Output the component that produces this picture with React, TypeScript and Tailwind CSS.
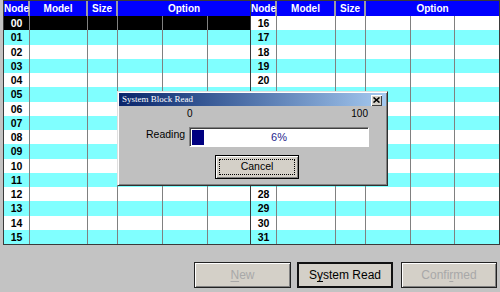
const leftCols = "grid grid-cols-[26px_58px_30px_45px_45px_42px]";
const rightCols = "grid grid-cols-[26px_59px_30px_45px_44px_44px]";

// rows whose node cell sits under the progress dialog
const hidden = [21, 22, 23, 24, 25, 26, 27];

function NodeTable({ cols, start, selected }: { cols: string; start: number; selected?: number }) {
  const rows = Array.from({ length: 16 }, (_, i) => start + i);
  return (
    <div className="flex flex-col">
      <div className={`${cols} h-[15px] bg-[#0000ff] text-white font-bold text-[10px] leading-[15px] text-center`}>
        <div className="border-r-2 border-[#9a9aa8]">Node</div>
        <div className="border-r-2 border-[#9a9aa8]">Model</div>
        <div className="border-r-2 border-[#9a9aa8]">Size</div>
        <div className="col-span-3">Option</div>
      </div>
      {rows.map((n, i) => {
        const isSel = n === selected;
        const bg = isSel ? "bg-black text-white" : i % 2 === 1 ? "bg-[#80ffff] text-black" : "bg-white text-black";
        return (
          <div key={n} className={`${cols} h-[14.25px] ${bg} text-[10.5px] font-bold leading-[14px]`}>
            <div className="border-r border-[#808080] text-center">
              {hidden.includes(n) ? "" : String(n).padStart(2, "0")}
            </div>
            <div className="border-r border-[#808080]" />
            <div className="border-r border-[#808080]" />
            <div className="border-r border-[#808080]" />
            <div className="border-r border-[#808080]" />
            <div />
          </div>
        );
      })}
    </div>
  );
}

function Mn({ children }: { children: string }) {
  return <span className="underline underline-offset-2">{children}</span>;
}

function WinButton({ children, disabled, main, className }: { children: React.ReactNode; disabled?: boolean; main?: boolean; className?: string }) {
  return (
    <div
      className={`h-[26px] flex items-center justify-center bg-[#d4d0c8] text-[12px] ${
        main ? "border-2 border-[#111]" : "border border-[#222] shadow-[inset_1px_1px_0_#ffffff,inset_-1px_-1px_0_#808080]"
      } ${disabled ? "text-[#a8a8a8]" : "text-black"} ${className ?? ""}`}
    >
      {children}
    </div>
  );
}

function ProgressDialog() {
  return (
    <div className="absolute left-[117px] top-[91px] w-[271px] h-[95px] bg-[#c0c0c0] border border-t-[#e0e0e0] border-l-[#e0e0e0] border-r-[#303030] border-b-[#303030] shadow-[inset_1px_1px_0_#ffffff,inset_-1px_-1px_0_#808080] p-[1px] font-['Liberation_Sans',Arial,sans-serif]">
      <div className="h-[13px] flex items-center justify-between bg-gradient-to-r from-[#0a246a] to-[#a6caf0] pl-[3px] pr-[4px]">
        <span className="text-white text-[9px] leading-[13px] font-['Liberation_Serif','Times_New_Roman',serif]">System Block Read</span>
        <div className="w-[11px] h-[11px] mt-[1px] bg-[#d4d0c8] shadow-[inset_1px_1px_0_#ffffff,inset_-1px_-1px_0_#404040] flex items-center justify-center">
          <svg width="7" height="6" viewBox="0 0 7 6">
            <path d="M0.5 0.5 L6.5 5.5 M6.5 0.5 L0.5 5.5" stroke="#000" strokeWidth="1.6" />
          </svg>
        </div>
      </div>
      <div className="pl-[27px]">
        <div className="ml-[43px] w-[180px] h-[15px] flex justify-between text-[10px] leading-[15px] text-black">
          <span className="-ml-[2px]">0</span>
          <span className="mr-[1px]">100</span>
        </div>
        <div className="flex mt-[6px]">
          <div className="w-[43px] text-[10.5px] leading-[13px] pt-[1px] text-black">Reading</div>
          <div className="relative w-[180px] h-[20px] bg-white border border-t-[#808080] border-l-[#808080] border-b-white border-r-white shadow-[inset_1px_1px_0_#404040] pl-[2px] pt-[2px] pb-[1px]">
            <div className="w-[12px] h-full bg-[#000080]" />
            <div className="absolute inset-0 flex items-center justify-center text-[11px] text-[#1e1e8c]">6%</div>
          </div>
        </div>
        <div className="mt-[8px] ml-[69px] w-[84px] h-[24px] border border-black bg-[#d4d0c8] shadow-[inset_1px_1px_0_#ffffff,inset_-1px_-1px_0_#808080] p-[3px]">
          <div className="h-full border border-dotted border-black flex items-center justify-center text-[10.5px] text-black">Cancel</div>
        </div>
      </div>
    </div>
  );
}

export default function App() {
  return (
    <div className="relative w-[500px] h-[292px] bg-[#c3c3c3] overflow-hidden font-['Liberation_Sans',Arial,sans-serif]">
      <div className="ml-[3px] w-[497px] flex border border-[#3a3a3a]">
        <NodeTable cols={leftCols} start={0} selected={0} />
        <div className="w-px bg-[#3a3a3a]" />
        <NodeTable cols={rightCols} start={16} />
      </div>
      <div className="flex justify-end mt-[17px] pr-[3px]">
        <WinButton disabled className="w-[97px]">
          <span><Mn>N</Mn>ew</span>
        </WinButton>
        <WinButton main className="w-[96px] ml-[6px]">
          <span>S<Mn>y</Mn>stem Read</span>
        </WinButton>
        <WinButton disabled className="w-[96px] ml-[8px]">
          <span>Confi<Mn>r</Mn>med</span>
        </WinButton>
      </div>
      <ProgressDialog />
    </div>
  );
}
